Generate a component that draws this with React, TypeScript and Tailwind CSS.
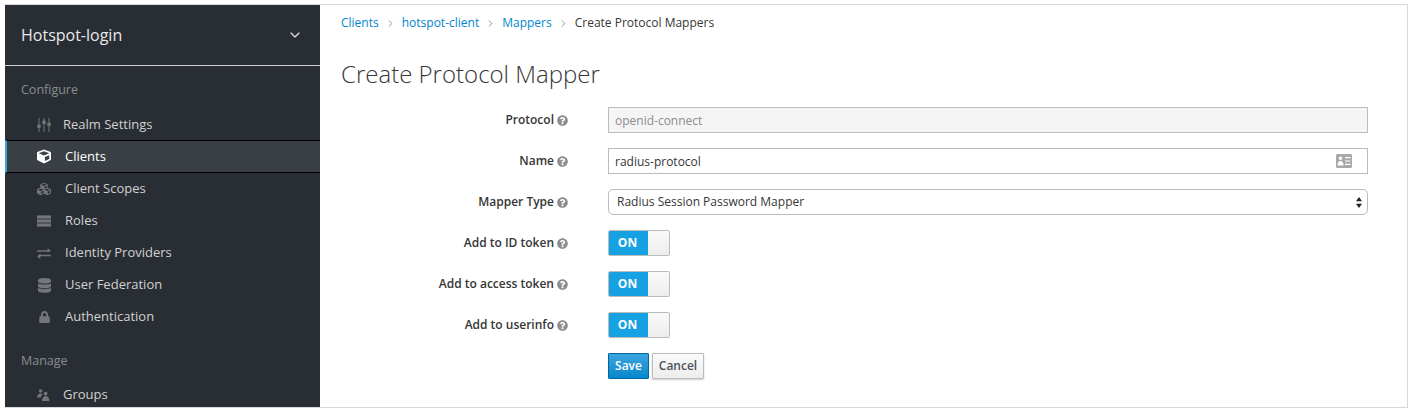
import { FaCube, FaCubes, FaDatabase, FaLock, FaQuestionCircle } from "react-icons/fa";
import { ChevronDown, ChevronRight } from "lucide-react";
import type { ReactNode } from "react";

function SlidersIcon({ className }: { className?: string }) {
  return (
    <svg viewBox="0 0 14 14" className={className} fill="currentColor">
      <rect x="1.5" y="0" width="1" height="14" />
      <rect x="6.5" y="0" width="1" height="14" />
      <rect x="11.5" y="0" width="1" height="14" />
      <rect x="0.3" y="6.5" width="3.4" height="3.4" rx="0.6" />
      <rect x="5.3" y="2.5" width="3.4" height="3.4" rx="0.6" />
      <rect x="10.3" y="4.5" width="3.4" height="3.4" rx="0.6" />
    </svg>
  );
}

function ServerIcon({ className }: { className?: string }) {
  return (
    <svg viewBox="0 0 15 12" className={className} fill="currentColor">
      <path d="M0 0h15v3.4H0z" />
      <rect x="0" y="4.3" width="15" height="3.4" />
      <path d="M0 8.6h15V12H0z" />
    </svg>
  );
}

function ExchangeIcon({ className }: { className?: string }) {
  return (
    <svg viewBox="0 0 15 12" className={className} fill="currentColor">
      <path d="M0 2.5h11.5V0L15 3.3 11.5 5V4.200H0z" />
      <path d="M15 7.300H3.500V6L0 9.300 3.500 12V9H15z" />
    </svg>
  );
}

function GroupsIcon({ className }: { className?: string }) {
  return (
    <svg viewBox="0 0 13 12" className={className} fill="currentColor">
      <circle cx="3.6" cy="2" r="1.8" />
      <path d="M0 8.5C0 6 1.6 4.6 3.6 4.6c.9 0 1.600.3 2.200.8C4.900 6 4 7 3.800 8.500z" />
      <circle cx="8.6" cy="4.6" r="1.9" />
      <path d="M5 12c0-3 1.500-5 3.600-5s3.900 2 3.900 5z" />
    </svg>
  );
}

function CardIcon({ className }: { className?: string }) {
  return (
    <svg viewBox="0 0 16 14" className={className} fill="currentColor" fillRule="evenodd">
      <path d="M1.5 0h13A1.500 1.500 0 0 1 16 1.500v11a1.500 1.500 0 0 1-1.500 1.500h-13A1.500 1.500 0 0 1 0 12.500v-11A1.500 1.500 0 0 1 1.500 0zM4.500 2.500a1.800 1.800 0 1 0 0 3.600 1.800 1.800 0 0 0 0-3.600zM1.500 11.500h6c0-2.600-1-4.400-3-4.400s-3 1.800-3 4.400zM9 3v1.200h5.500V3zM9 6.400v1.200h5.500V6.400zM9 9.800V11h5.500V9.800z" />
    </svg>
  );
}

function NavItem({ icon, label, active }: { icon: ReactNode; label: string; active?: boolean }) {
  return (
    <div
      className={
        active
          ? "flex h-[33px] items-center border-y border-b-black border-t-black border-l-2 border-l-[#39a5dc] bg-[#393f44] pl-[30px] text-white"
          : "flex h-8 items-center pl-[32px] text-[#d1d1d1]"
      }
    >
      <span className={active ? "flex w-[14px] shrink-0 text-white" : "flex w-[14px] shrink-0 text-[#72767b]"}>
        {icon}
      </span>
      <span className="ml-[14px] text-[13px]">{label}</span>
    </div>
  );
}

function HelpLabel({ children }: { children: string }) {
  return (
    <div className="flex w-[227px] shrink-0 items-center justify-end gap-[3px] text-[12px] font-semibold text-[#363636]">
      {children}
      <FaQuestionCircle className="h-[11px] w-[11px] text-[#8b8d8f]" />
    </div>
  );
}

function OnSwitch() {
  return (
    <div className="flex h-[26px] w-[62px] overflow-hidden rounded-[2px] border border-[#bbb]">
      <div className="flex w-[39px] items-center justify-center bg-[#16a2e2] pr-[2px] text-[12px] font-bold text-white">ON</div>
      <div className="flex-1 bg-gradient-to-b from-[#fafafa] to-[#ededed]" />
    </div>
  );
}

export default function App() {
  return (
    <div className="h-[412px] w-[1412px] overflow-hidden bg-white pb-[4px] pl-[5px] pr-[4px] pt-[4px] font-['Open_Sans',sans-serif]">
      <div className="flex h-[404px] border-y border-r border-[#d8d8d8]">
        <aside className="flex w-[315px] shrink-0 flex-col overflow-hidden bg-[#292e34]">
          <div className="flex h-[61px] shrink-0 items-center justify-between border-b border-[#d1d1d1] pl-[16px] pr-[17px] text-[16px] text-[#e8e8e8]">
            <span>Hotspot-login</span>
            <ChevronDown className="h-[16px] w-[16px]" strokeWidth={1.75} />
          </div>
          <div className="mt-[15px] h-[18px] pl-[16px] text-[12.5px] leading-[18px] text-[#8b8d8f]">Configure</div>
          <div className="mt-[5px]">
            <div className="flex h-[36px] items-center pl-[32px] pt-[6px] text-[#d1d1d1]">
              <SlidersIcon className="h-[14px] w-[14px] text-[#72767b]" />
              <span className="ml-[12px] text-[13px]">Realm Settings</span>
            </div>
            <NavItem active icon={<FaCube className="h-[15px] w-[15px]" />} label="Clients" />
            <NavItem icon={<FaCubes className="h-[16px] w-[18px] max-w-none" />} label="Client Scopes" />
            <NavItem icon={<ServerIcon className="h-[12px] w-[15px] max-w-none" />} label="Roles" />
            <NavItem icon={<ExchangeIcon className="h-[11px] w-[15px] max-w-none" />} label="Identity Providers" />
            <NavItem icon={<FaDatabase className="ml-px h-[15px] w-[13px]" />} label="User Federation" />
            <NavItem icon={<FaLock className="ml-[2px] h-[12px] w-[11px]" />} label="Authentication" />
          </div>
          <div className="mt-[19px] h-[18px] pl-[16px] text-[12.5px] leading-[18px] text-[#8b8d8f]">Manage</div>
          <div className="mt-[13px] flex h-8 items-center pl-[32px] text-[#d1d1d1]">
            <GroupsIcon className="h-[12px] w-[13px] text-[#72767b]" />
            <span className="ml-[13px] text-[13px]">Groups</span>
          </div>
        </aside>
        <main className="min-w-0 flex-1 pl-[21px] pr-[39px]">
          <nav className="flex h-[36px] items-center text-[12px] text-[#0088ce]">
            <span>Clients</span>
            <ChevronRight className="mx-[6px] h-[11px] w-[11px] text-[#8b8d8f]" />
            <span>hotspot-client</span>
            <ChevronRight className="mx-[6px] h-[11px] w-[11px] text-[#8b8d8f]" />
            <span>Mappers</span>
            <ChevronRight className="mx-[6px] h-[11px] w-[11px] text-[#8b8d8f]" />
            <span className="text-[#363636]">Create Protocol Mappers</span>
          </nav>
          <h1 className="mt-[15px] text-[24px] font-light leading-[36px] text-[#363636]">Create Protocol Mapper</h1>
          <div className="mt-[15px] flex flex-col gap-[15px]">
            <div className="flex h-[26px]">
              <HelpLabel>Protocol</HelpLabel>
              <div className="ml-[40px] flex flex-1 items-center border border-[#bbb] bg-[#f5f5f5] px-[6px] pt-px text-[12px] text-[#8b8d8f]">openid-connect</div>
            </div>
            <div className="flex h-[26px]">
              <HelpLabel>Name</HelpLabel>
              <div className="ml-[40px] flex flex-1 items-center justify-between border border-[#bbb] bg-white pl-[6px] pr-[15px] text-[12px] text-[#363636]">
                <span className="pt-px">radius-protocol</span>
                <CardIcon className="h-[14px] w-[16px] text-[#a8a8a8]" />
              </div>
            </div>
            <div className="flex h-[26px]">
              <HelpLabel>Mapper Type</HelpLabel>
              <div className="ml-[40px] flex flex-1 items-center justify-between rounded-[5px] border border-[#bbb] bg-white pl-[8px] pr-[5px] text-[12px] text-[#363636]">
                Radius Session Password Mapper
                <svg viewBox="0 0 6 11" className="h-[11px] w-[6px] text-[#222]" fill="currentColor">
                  <path d="M3 0l3 4.300H0zM3 11L0 6.700h6z" />
                </svg>
              </div>
            </div>
            <div className="flex h-[26px]">
              <HelpLabel>Add to ID token</HelpLabel>
              <div className="ml-[40px]"><OnSwitch /></div>
            </div>
            <div className="flex h-[26px]">
              <HelpLabel>Add to access token</HelpLabel>
              <div className="ml-[40px]"><OnSwitch /></div>
            </div>
            <div className="flex h-[26px]">
              <HelpLabel>Add to userinfo</HelpLabel>
              <div className="ml-[40px]"><OnSwitch /></div>
            </div>
            <div className="ml-[267px] flex gap-[3px]">
              <button className="h-[26px] w-[41px] rounded-[1px] border border-[#00659c] bg-gradient-to-b from-[#39a5dc] to-[#0088ce] text-[12px] font-semibold text-white">Save</button>
              <button className="h-[26px] w-[52px] rounded-[1px] border border-[#bbb] bg-gradient-to-b from-[#fafafa] to-[#ededed] text-[12px] font-semibold text-[#4d5258] shadow-[0_1px_2px_rgba(0,0,0,0.2)]">Cancel</button>
            </div>
          </div>
        </main>
      </div>
    </div>
  );
}
